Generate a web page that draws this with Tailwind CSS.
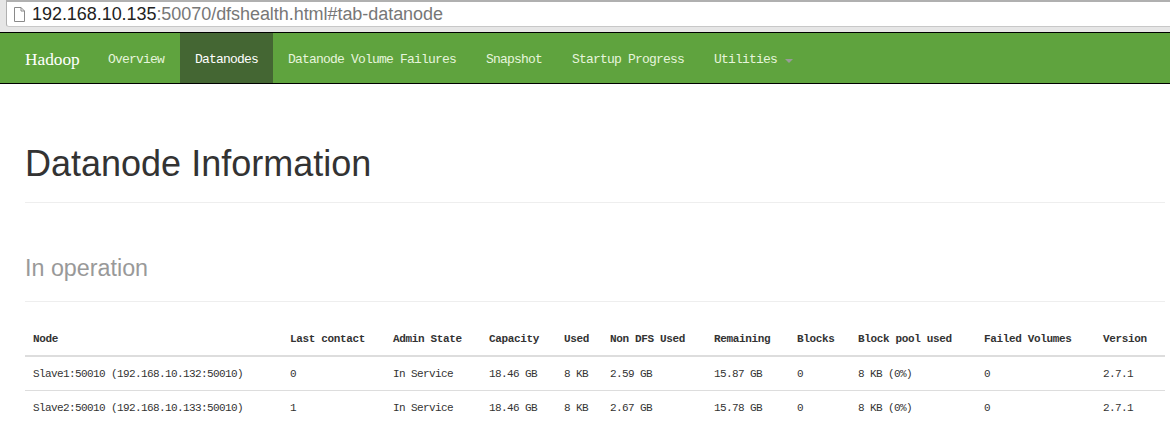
<!DOCTYPE html>
<html>
<head>
<meta charset="utf-8">
<script src="https://cdn.jsdelivr.net/npm/@tailwindcss/browser@4"></script>
</head>
<body class="bg-white w-[1170px] h-[436px] overflow-hidden font-['Liberation_Sans',sans-serif]">
  <div class="h-[32px] bg-[#e6e6e6] pl-[6px]">
    <div class="h-[27px] bg-white border border-r-0 border-t-2 border-[#b0b0b0] border-b-[#c8c8c8] rounded-bl-[3px] flex items-center pl-[6px] gap-[6px]">
      <svg width="13" height="15" viewBox="0 0 13 15" fill="none" stroke="#8a8a8a" stroke-width="1"><path d="M1.500 .5h6.500l3.500 3.500v10.500h-10z M8 .5v3.500h3.500"/></svg>
      <div class="text-[18px] leading-none tracking-[-0.05px] text-[#777]"><span class="text-[#222]">192.168.10.135</span>:50070/dfshealth.html#tab-datanode</div>
    </div>
  </div>
  <nav class="h-[52px] bg-[#5fa33e] border-y border-black flex font-['Liberation_Mono',monospace] text-[13px] tracking-[-0.8px] text-[#e6f5dc]">
    <a class="font-['Liberation_Serif',serif] tracking-normal text-[17.300px] text-white pl-[25px] flex items-center w-[93px] pt-[3px]">Hadoop</a>
    <a class="pl-[15px] pr-[16px] flex items-center pt-[3px]">Overview</a>
    <a class="px-[15px] flex items-center pt-[3px] bg-[#446633] text-white">Datanodes</a>
    <a class="px-[15px] flex items-center pt-[3px]">Datanode Volume Failures</a>
    <a class="px-[15px] flex items-center pt-[3px]">Snapshot</a>
    <a class="px-[15px] flex items-center pt-[3px]">Startup Progress</a>
    <a class="px-[15px] flex items-center pt-[3px] gap-[8px]">Utilities<span class="w-0 h-0 border-x-[4px] border-x-transparent border-t-[4px] border-t-[#9a9a9a] mt-[2px]"></span></a>
  </nav>
  <main class="pl-[25px] pr-[5px]">
    <div class="h-[119px] border-b border-[#eeeeee] pt-[60px]">
      <h1 class="text-[36px] leading-[40px] text-[#333]">Datanode Information</h1>
    </div>
    <div class="h-[99px] border-b border-[#eeeeee] pt-[52px]">
      <h2 class="text-[23.300px] leading-[26px] text-[#999]">In operation</h2>
    </div>
    <table class="mt-[20px] w-[1140px] table-fixed border-collapse font-['Liberation_Mono',monospace] text-[11px] tracking-[-0.6px] text-[#333]">
      <colgroup>
        <col class="w-[257px]"><col class="w-[103px]"><col class="w-[96px]"><col class="w-[75px]"><col class="w-[46px]"><col class="w-[104px]"><col class="w-[83px]"><col class="w-[61px]"><col class="w-[126px]"><col class="w-[119px]"><col class="w-[70px]">
      </colgroup>
      <thead>
        <tr class="h-[34px] border-b-2 border-[#dddddd] text-left tracking-[-0.35px]">
          <th class="px-[8px] pt-[2px] font-bold">Node</th>
          <th class="px-[8px] pt-[2px] font-bold">Last contact</th>
          <th class="px-[8px] pt-[2px] font-bold">Admin State</th>
          <th class="px-[8px] pt-[2px] font-bold">Capacity</th>
          <th class="px-[8px] pt-[2px] font-bold">Used</th>
          <th class="px-[8px] pt-[2px] font-bold">Non DFS Used</th>
          <th class="px-[8px] pt-[2px] font-bold">Remaining</th>
          <th class="px-[8px] pt-[2px] font-bold">Blocks</th>
          <th class="px-[8px] pt-[2px] font-bold">Block pool used</th>
          <th class="px-[8px] pt-[2px] font-bold">Failed Volumes</th>
          <th class="px-[8px] pt-[2px] font-bold">Version</th>
        </tr>
      </thead>
      <tbody>
        <tr class="h-[34px] border-b border-[#dddddd]">
          <td class="px-[8px] pt-[2px]">Slave1:50010 (192.168.10.132:50010)</td><td class="px-[8px] pt-[2px]">0</td><td class="px-[8px] pt-[2px]">In Service</td><td class="px-[8px] pt-[2px]">18.46 GB</td><td class="px-[8px] pt-[2px]">8 KB</td><td class="px-[8px] pt-[2px]">2.59 GB</td><td class="px-[8px] pt-[2px]">15.87 GB</td><td class="px-[8px] pt-[2px]">0</td><td class="px-[8px] pt-[2px]">8 KB (0%)</td><td class="px-[8px] pt-[2px]">0</td><td class="px-[8px] pt-[2px]">2.7.1</td>
        </tr>
        <tr class="h-[34px]">
          <td class="px-[8px] pt-[2px]">Slave2:50010 (192.168.10.133:50010)</td><td class="px-[8px] pt-[2px]">1</td><td class="px-[8px] pt-[2px]">In Service</td><td class="px-[8px] pt-[2px]">18.46 GB</td><td class="px-[8px] pt-[2px]">8 KB</td><td class="px-[8px] pt-[2px]">2.67 GB</td><td class="px-[8px] pt-[2px]">15.78 GB</td><td class="px-[8px] pt-[2px]">0</td><td class="px-[8px] pt-[2px]">8 KB (0%)</td><td class="px-[8px] pt-[2px]">0</td><td class="px-[8px] pt-[2px]">2.7.1</td>
        </tr>
      </tbody>
    </table>
  </main>
</body>
</html>
